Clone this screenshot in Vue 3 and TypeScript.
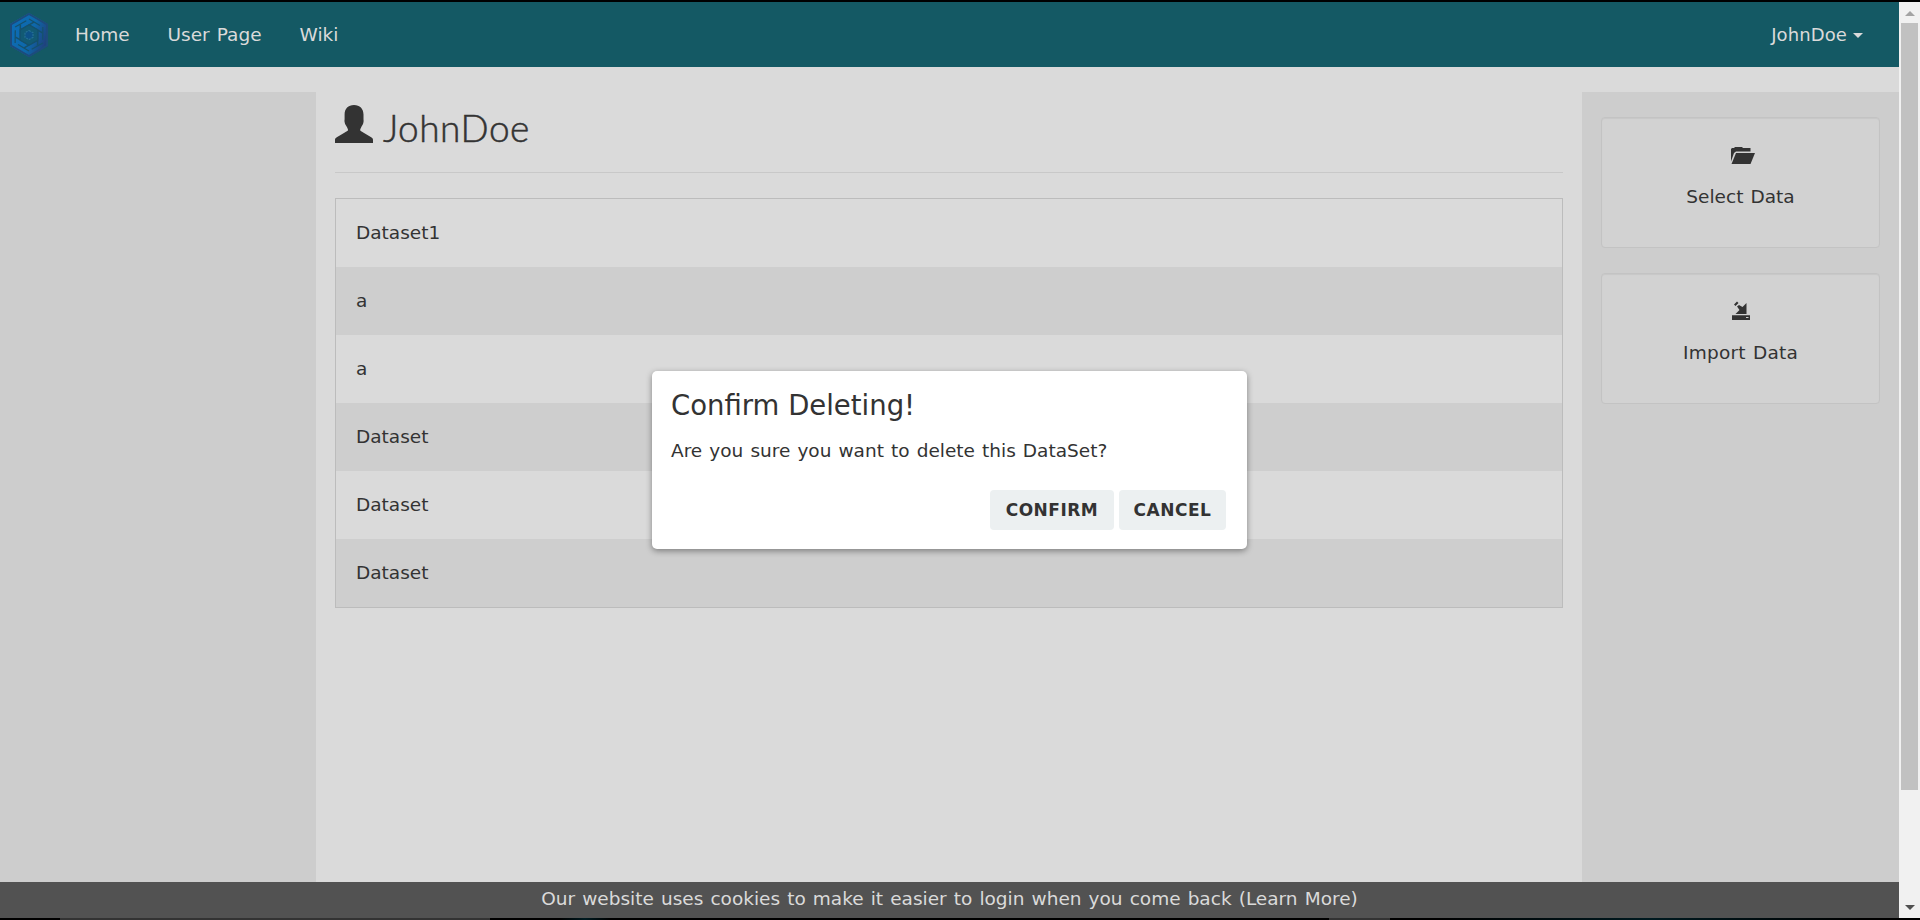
<script setup lang="ts">
const links = [
  { label: 'Home', cls: 'home' },
  { label: 'User Page', cls: 'user' },
  { label: 'Wiki', cls: 'wiki' },
]
const datasets: string[] = ['Dataset1', 'a', 'a', 'Dataset', 'Dataset', 'Dataset']
const blades: number[] = [0, 60, 120, 180, 240, 300]
</script>

<template>
  <div class="screen">
    <div class="viewport">
      <div class="page">
        <nav class="navbar">
          <svg class="logo" viewBox="-19 -22 38 44" width="38" height="44">
            <defs>
              <linearGradient id="hex" x1="0" y1="0.3" x2="1" y2="0.7">
                <stop offset="0" stop-color="#0d6cb6" />
                <stop offset="0.55" stop-color="#0e68aa" />
                <stop offset="1" stop-color="#223c76" />
              </linearGradient>
            </defs>
            <path d="M0-22 19-11V11L0 22-19 11V-11Z" fill="url(#hex)" />
            <path d="M0-21 18-10.500V10.500L0 21-18 10.500V-10.500Z" fill="none" stroke="#1d4b7c" stroke-width="2" />
            <g v-for="a in blades" :key="a" :transform="`rotate(${a})`" fill="none" stroke="#15516c">
              <path d="M-8.700-5 0-10 13.500-2.200" stroke-width="1.500" />
              <path d="M0-16 11-9.500" stroke-width="1.200" />
            </g>
            <path d="M0-9.500 8.200-4.700V4.700L0 9.500-8.200 4.700V-4.700Z" fill="#125a74" />
            <path d="M0-4.600 4-2.300V2.300L0 4.600-4 2.300V-2.300Z" fill="#0d5288" stroke="#257094" stroke-width="1.200" stroke-dasharray="2 1" />
          </svg>
          <a v-for="l in links" :key="l.label" class="link" :class="l.cls">{{ l.label }}</a>
          <a class="account"><span>JohnDoe</span><i class="caret"></i></a>
        </nav>

        <main class="columns">
          <aside class="side"></aside>
          <section class="content">
            <h1>
              <svg viewBox="0 0 38 38" width="38" height="38" fill="#333">
                <path d="M19 0c5.800 0 9.500 3.700 9.500 9.500v4.500c0 1 .3 1.400 0 3-.4 2.500-1.500 3.500-2.300 5.300-.5 1.200-1 1.600-1 2.700 0 1.300 1.500 1.500 3 2.400l8 4.900c1.500.9 1.800 1.500 1.800 3V38H0v-2.700c0-1.500.3-2.100 1.800-3l8-4.900c1.500-.9 3.200-1.100 3.200-2.400 0-1.100-.5-1.500-1-2.700-.8-1.800-2-2.800-2.400-5.300-.3-1.600 0-2 0-3V9.500C9.600 3.700 13.200 0 19 0Z" />
              </svg>
              <span>JohnDoe</span>
            </h1>
            <ul class="list">
              <li v-for="(d, i) in datasets" :key="i">{{ d }}</li>
            </ul>
          </section>
          <aside class="side tools">
            <div class="well">
              <svg class="folder" viewBox="0 0 24 18" width="24" height="18" fill="#333">
                <path d="M0 15V2.500l1-1h2L4 .5h7l1 1h7.500V5H5L3 6.500Z" />
                <path d="M5 6.500H24L19.500 17.500H.5Z" />
              </svg>
              <span class="select">Select Data</span>
            </div>
            <div class="well">
              <svg class="import" viewBox="0 0 18 19" width="18" height="19" fill="#333">
                <path d="M2 3.500 5 .5 6.500 2 3.500 5ZM5 5.500 7 4 10.500 6 14.500 2V13H3.500L7.500 9Z" />
                <path fill-rule="evenodd" d="M0 14.200H18V19H0ZM14 16V17H16.500V16Z" />
              </svg>
              <span class="importlabel">Import Data</span>
            </div>
          </aside>
        </main>

        <footer class="cookies"><span>Our website uses cookies to make it easier to login when you come back (Learn More)</span></footer>

        <div class="dialog" role="dialog">
          <h2>Confirm Deleting!</h2>
          <p>Are you sure you want to delete this DataSet?</p>
          <div class="actions">
            <button class="confirm">CONFIRM</button>
            <button class="cancel">CANCEL</button>
          </div>
        </div>
      </div>
      <div class="scrollbar">
        <i class="up"></i>
        <i class="thumb"></i>
        <i class="down"></i>
      </div>
    </div>
    <div class="edge"></div>
  </div>
</template>

<style>
body { margin: 0; overflow: hidden; }
</style>

<style scoped>
.screen {
  display: flex; flex-direction: column; box-sizing: border-box;
  width: 1920px; height: 920px; border-top: 2px solid #000;
  font: 18.500px/26px "DejaVu Sans", sans-serif; word-spacing: 1.200px; color: #333;
}
.viewport { display: flex; height: 916px; }
.page { position: relative; display: flex; flex-direction: column; width: 1899px; background: #dadada; }
.navbar { display: flex; align-items: center; height: 65px; background: #145964; color: #dadada; white-space: nowrap; }
.logo { margin: 0 27px 0 10px; flex: none; }
.link, .account { padding-top: 1px; }
.home { width: 92.500px; }
.user { width: 132px; }
.account { display: flex; align-items: center; margin: 0 36px 0 auto; font-size: 18px; letter-spacing: .1px; }
.caret { margin: 1px 0 0 6px; border: 5px solid transparent; border-top-color: #dadada; border-bottom: 0; }
.columns { display: flex; height: 790px; margin-top: 25px; }
.side { box-sizing: border-box; width: 316px; background: #cdcdcd; }
.content { flex: 1; padding: 0 19px; }
.tools { width: 317px; padding: 25px 19px; }
h1 {
  display: flex; align-items: flex-start; gap: 10px; box-sizing: border-box; height: 81px; margin: 0 0 25px; padding-top: 13px;
  border-bottom: 1px solid #c8c8c8; font: 300 37px/46px Lato, sans-serif; letter-spacing: .5px; -webkit-text-stroke: .5px #333;
}
.list { margin: 0; padding: 0; list-style: none; border: 1px solid #bcbcbc; }
.list li { box-sizing: border-box; height: 68px; padding: 21px 20px; }
.list li:nth-child(even) { background: #cecece; }
.well {
  display: flex; flex-direction: column; align-items: center; box-sizing: border-box; height: 131px; margin-bottom: 25px;
  border: 1px solid #c3c3c3; border-radius: 4px; background: #d2d2d2; box-shadow: inset 0 1px 1px rgba(0, 0, 0, .05);
}
.well svg { height: 19px; margin-top: 27px; }
.well .folder { margin: 28px 0 -1px 4px; }
.well span { margin-top: 20px; }
.importlabel { letter-spacing: .2px; }
.cookies { height: 36px; background: #525252; color: #dadada; text-align: center; line-height: 34px; }
.dialog {
  position: absolute; left: 652px; top: 369px; box-sizing: border-box; width: 595px; height: 178px; padding: 17px 21px 19px 19px;
  border-radius: 5px; background: #fff; box-shadow: 0 2px 6px rgba(0, 0, 0, .4);
}
h2 { margin: 0; font-weight: 400; font-size: 27.500px; line-height: 34px; word-spacing: 0; }
p { margin: 16px 0 0; }
.actions { display: flex; justify-content: flex-end; gap: 5px; margin-top: 26px; }
button { height: 40px; padding: 0; border: 0; border-radius: 4px; background: #ecf0f1; color: #333; font: 700 17px/40px "DejaVu Sans", sans-serif; letter-spacing: .5px; }
.confirm { width: 124px; }
.cancel { width: 107px; }
.scrollbar { display: flex; flex-direction: column; align-items: center; width: 21px; background: #f1f1f1; }
.up { margin: 9px 0 7px; border: 5px solid transparent; border-bottom-color: #a3a3a3; border-top: 0; }
.thumb { width: 17px; height: 767px; background: #c1c1c1; }
.down { margin-top: 115px; border: 5px solid transparent; border-top-color: #505050; border-bottom: 0; }
.edge {
  height: 2px;
  background: linear-gradient(90deg, #000 0 60px, #333 60px 490px, #000 490px 560px, #001a20 585px, #000 610px 1329px, #333 1329px 1390px, #000 1390px 1440px, #001a20 1650px, #000 1860px);
}
</style>
